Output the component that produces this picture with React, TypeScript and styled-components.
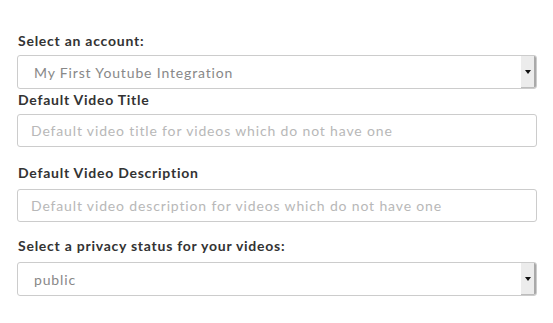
import React from "react";
import styled, { createGlobalStyle } from "styled-components";

const Global = createGlobalStyle`
  html, body { margin: 0; padding: 0; background: #fff; }
  body { font-family: "Lato", "Noto Sans", sans-serif; }
  * { box-sizing: border-box; }
`;

const Form = styled.form`
  display: flex;
  flex-direction: column;
  padding: 31px 16px 0 17px;
  width: 553px;
`;

const Field = styled.div<{ $gap: number }>`
  display: flex;
  flex-direction: column;
  margin-bottom: ${(p) => p.$gap}px;
`;

const Label = styled.label<{ $space: number }>`
  display: block;
  height: 20px;
  line-height: 20px;
  padding-left: 1px;
  margin-bottom: ${(p) => p.$space}px;
  font-size: 14px;
  font-weight: 700;
  letter-spacing: 0.75px;
  color: #333;
`;

const SelectWrap = styled.div`
  position: relative;
  height: 34px;
`;

const Select = styled.select`
  appearance: none;
  -webkit-appearance: none;
  width: 100%;
  height: 34px;
  border: 1px solid #ccc;
  border-radius: 3px;
  background: #fff;
  padding: 0 0 0 16px;
  font-family: inherit;
  font-size: 14px;
  letter-spacing: 0.85px;
  color: #888;
  outline: none;
`;

const ArrowBox = styled.div`
  position: absolute;
  top: 1px;
  right: 1px;
  bottom: 1px;
  width: 15px;
  background: #ececec;
  border-right: 2px solid #a9a9a9;
  border-bottom: 1px solid #bdbdbd;
  display: flex;
  align-items: center;
  justify-content: center;
  pointer-events: none;
  border-radius: 0 2px 2px 0;
`;

const Arrow = styled.span`
  width: 0;
  height: 0;
  border-left: 3px solid transparent;
  border-right: 3px solid transparent;
  border-top: 4px solid #111;
`;

const Input = styled.input`
  width: 100%;
  height: 33px;
  border: 1px solid #ccc;
  border-radius: 3px;
  padding: 0 0 0 13px;
  font-family: inherit;
  font-size: 14px;
  letter-spacing: 0.85px;
  color: #555;
  outline: none;
  &::placeholder { color: #b8b8b8; }
`;

export default function App() {
  return (
    <>
      <Global />
      <Form>
        <Field $gap={1}>
          <Label $space={4}>Select an account:</Label>
          <SelectWrap>
            <Select defaultValue="1">
              <option value="1">My First Youtube Integration</option>
            </Select>
            <ArrowBox><Arrow /></ArrowBox>
          </SelectWrap>
        </Field>
        <Field $gap={16}>
          <Label $space={4}>Default Video Title</Label>
          <Input placeholder="Default video title for videos which do not have one" />
        </Field>
        <Field $gap={14}>
          <Label $space={6}>Default Video Description</Label>
          <Input placeholder="Default video description for videos which do not have one" />
        </Field>
        <Field $gap={0}>
          <Label $space={6}>Select a privacy status for your videos:</Label>
          <SelectWrap>
            <Select defaultValue="public">
              <option value="public">public</option>
            </Select>
            <ArrowBox><Arrow /></ArrowBox>
          </SelectWrap>
        </Field>
      </Form>
    </>
  );
}
